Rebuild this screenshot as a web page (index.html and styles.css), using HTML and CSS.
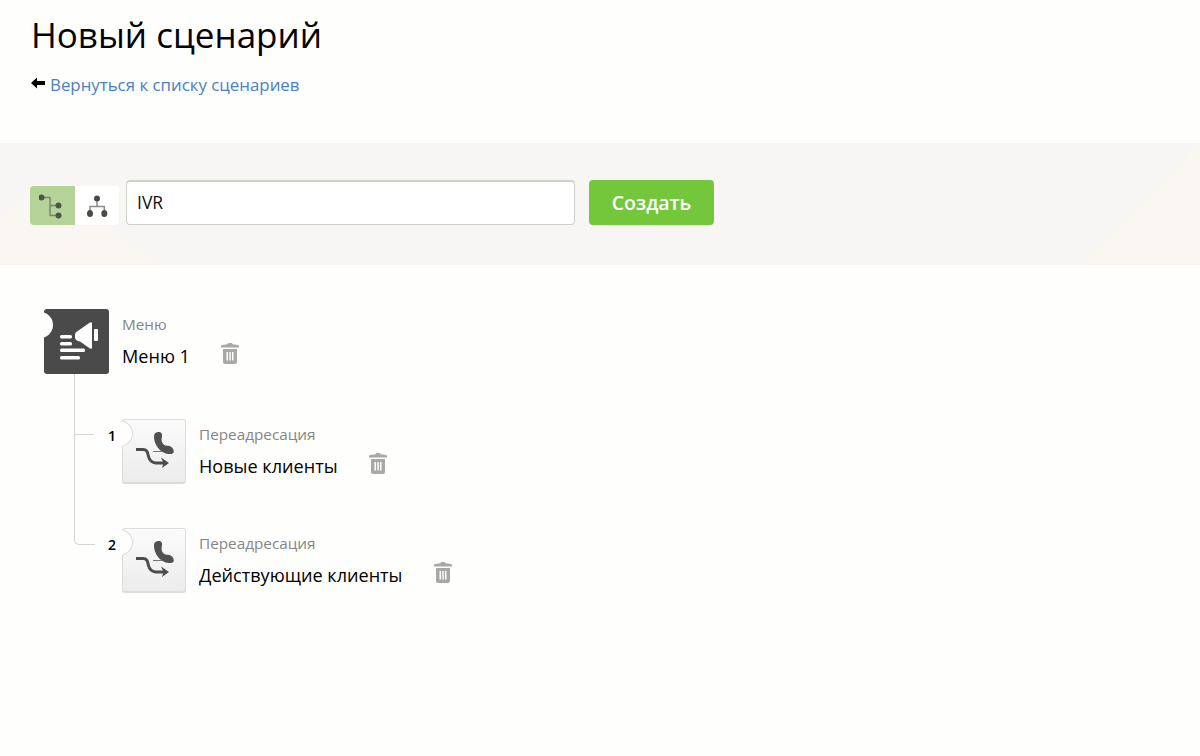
FILE: index.html
```html
<!DOCTYPE html>
<html lang="ru">
<head>
<meta charset="utf-8">
<title>Новый сценарий</title>
<link rel="stylesheet" href="styles.css">
</head>
<body>
<svg class="defs" width="0" height="0">
  <defs>
    <symbol id="trash" viewBox="0 0 18 22">
      <path d="M6.500 2.200Q6.500 1 8 1h2q1.500 0 1.500 1.200l5.500.8q1 .2 1 1.200V5.500H0V4.200q0-1 1-1.200z" fill="#a8a8a8"/>
      <path fill-rule="evenodd" d="M2 7h14v13q0 2-2 2H4q-2 0-2-2zM5.500 10v8.500h1.500V10zM8.300 10v8.500h1.500V10zM11 10v8.500h1.500V10z" fill="#a8a8a8"/>
    </symbol>
    <symbol id="forward" viewBox="0 0 64 64">
      <path d="M32 17c0-3 3-4.500 5.500-4 2.500.5 3 3 2.300 5.500-.7 3 0 5.500 2.500 7.500 1.500 1 3.500.5 5 1 2.500.8 4.500 3 4.500 5.500 0 2-2.500 2.800-5 2.500C38 34.500 31.500 25 32 17z" fill="#505050"/>
      <path d="M14 30.500h7c4.500 0 4.500 3 5.500 7 1 4 3 6 7 6.500h10" fill="none" stroke="#4c4c4c" stroke-width="3"/>
      <path d="M39 38.500l8 5.500-7 5 1.500-5z" fill="#4c4c4c"/>
      <path d="M31 32.500h9" fill="none" stroke="#777" stroke-width="1"/>
    </symbol>
  </defs>
</svg>

<header class="head">
  <h1 class="title">Новый сценарий</h1>
  <a class="back" href="#">
    <svg class="back-arrow" viewBox="0 0 14 12" width="14" height="12"><path d="M0 6l6-5.500V4h8v4H6v3.500z" fill="#000"/></svg>
    <span>Вернуться к списку сценариев</span>
  </a>
</header>

<section class="band">
  <div class="switch">
    <button class="switch-btn active" type="button" aria-label="Список">
      <svg viewBox="0 0 26 30" width="26" height="30">
        <path d="M2.500 6.500H11v18h8.500M11 14.500h8.500" fill="none" stroke="#7c8276" stroke-width="1.500"/>
        <circle cx="2.500" cy="6.500" r="3" fill="#50554c"/><circle cx="19.500" cy="14.500" r="3" fill="#50554c"/><circle cx="19.500" cy="24.500" r="3" fill="#50554c"/>
      </svg>
    </button>
    <button class="switch-btn" type="button" aria-label="Дерево">
      <svg viewBox="0 0 26 30" width="26" height="30">
        <path d="M13 7.500v8M6 22v-6.500h14.300V22" fill="none" stroke="#8a8a8a" stroke-width="1.500"/>
        <circle cx="13" cy="7.500" r="3" fill="#464c42"/><ellipse cx="6" cy="22.500" rx="3" ry="3.500" fill="#464c42"/><ellipse cx="20.300" cy="22.500" rx="3" ry="3.500" fill="#464c42"/>
      </svg>
    </button>
  </div>
  <input class="name" type="text" value="IVR">
  <button class="create" type="button">Создать</button>
</section>

<main class="tree">
  <div class="node root">
    <div class="tile tile-dark">
      <svg viewBox="0 0 65 65" width="65" height="65">
        <path d="M31 25.500q0-2 2-3l13-9q2-1 2 1v24q0 2-2 1l-10-7q-5-1-5-4z" fill="#fff"/>
        <rect x="50" y="20" width="4" height="12" rx="1" fill="#fff"/>
        <rect x="16" y="26" width="12" height="3.600" rx="1.500" fill="#fff"/>
        <rect x="16" y="33" width="12" height="3.600" rx="1.500" fill="#fff"/>
        <rect x="16" y="39.500" width="25" height="3.600" rx="1.500" fill="#fff"/>
        <rect x="16" y="47" width="20" height="3.600" rx="1.500" fill="#fff"/>
      </svg>
    </div>
    <div class="info">
      <div class="kind">Меню</div>
      <div class="line"><span class="label">Меню 1</span><svg class="trash"><use href="#trash"/></svg></div>
    </div>
  </div>

  <div class="branches">
    <div class="node child">
      <span class="num">1</span>
      <div class="tile tile-light"><svg viewBox="0 0 64 64" width="64" height="64"><use href="#forward"/></svg></div>
      <div class="info">
        <div class="kind">Переадресация</div>
        <div class="line"><span class="label">Новые клиенты</span><svg class="trash"><use href="#trash"/></svg></div>
      </div>
    </div>
    <div class="node child last">
      <span class="num">2</span>
      <div class="tile tile-light"><svg viewBox="0 0 64 64" width="64" height="64"><use href="#forward"/></svg></div>
      <div class="info">
        <div class="kind">Переадресация</div>
        <div class="line"><span class="label">Действующие клиенты</span><svg class="trash"><use href="#trash"/></svg></div>
      </div>
    </div>
  </div>
</main>
</body>
</html>
```
FILE: styles.css
```css
* { box-sizing: border-box; }
html, body { margin: 0; height: 756px; overflow: hidden; }
body { background: #fefefd; font-family: "Open Sans", "Noto Sans", sans-serif; color: #000; }
.defs { position: absolute; }

.head { height: 143px; padding: 13px 31px 0; }
.title { margin: 0; font-size: 35px; font-weight: 400; line-height: 44px; }
.back { display: flex; align-items: center; gap: 5px; margin-top: 17px; height: 20px; color: #4a80c4; font-size: 16.850px; text-decoration: none; }
.back-arrow { margin-top: -3px; }

.band { position: relative; height: 122px; background: #f7f6f4; display: flex; align-items: flex-start; padding: 37px 0 0 30px; overflow: hidden; }
.band::before, .band::after { content: ""; position: absolute; bottom: 0; background: #faf6f1; }
.band::before { left: 0; width: 160px; height: 85px; clip-path: polygon(0 42px, 40px 0, 160px 100%, 0 100%); }
.band::after { right: 0; width: 118px; height: 122px; clip-path: polygon(100% 0, 100% 100%, 0 100%); }

.switch { position: relative; z-index: 1; display: flex; margin-top: 6px; width: 89px; height: 39px; border-radius: 4px; overflow: hidden; background: #fff; }
.switch-btn { flex: 1 1 50%; border: 0; padding: 0; background: #fff; display: flex; align-items: center; justify-content: center; }
.switch-btn.active { background: #b4d396; }
.name { position: relative; z-index: 1; margin-left: 7px; width: 449px; height: 45px; border: 1px solid #cfcfcc; border-top-width: 2px; border-radius: 4px; padding: 0 10px 3px; background: #fff; font: 17.500px "Open Sans", sans-serif; color: #111; outline: 0; }
.create { position: relative; z-index: 1; margin-left: 14px; width: 125px; height: 45px; border: 0; border-radius: 4px; background: #74c73a; color: #fff; font: 600 19.500px "Open Sans", sans-serif; padding: 0 0 1px; }

.tree { padding: 44px 0 0 44px; }
.node { display: flex; align-items: flex-start; }
.tile { position: relative; flex: none; border-radius: 3px; }
.tile svg { display: block; }
.tile::before { content: ""; position: absolute; border-radius: 50%; background: #fefefd; }
.tile-dark { width: 65px; height: 65px; background: #4a4a4a; overflow: hidden; }
.tile-dark::before { top: 3px; left: -17px; width: 26px; height: 26px; }
.tile-light { width: 64px; height: 65px; background: linear-gradient(#fbfbfb, #ececec); border: 1px solid #dcdcdc; border-bottom-width: 2px; }
.tile-light::before { top: 0; left: -18px; width: 26px; height: 25px; border: 1px solid #dcdcdc; clip-path: inset(0 0 0 17px); }
.tile-light svg { margin: -1px 0 0 -1px; }

.info { margin-left: 13px; }
.kind { margin-top: 5px; font-size: 15.300px; line-height: 20px; color: #858585; }
.line { display: flex; align-items: center; margin-top: 11px; height: 22px; }
.label { font-size: 18.100px; line-height: 22px; }
.trash { width: 18px; height: 22px; margin: -6px 0 0 31px; }

.branches { position: relative; margin-left: 30px; padding-top: 45px; }
.branches::before { content: ""; position: absolute; left: 0; top: 0; width: 20px; height: 170px; border-left: 1px solid #d5d5d5; border-bottom: 1px solid #d5d5d5; border-bottom-left-radius: 5px; }
.child { position: relative; padding-left: 48px; height: 109px; }
.child::before { content: ""; position: absolute; left: 0; top: 15px; width: 20px; height: 1px; background: #d5d5d5; }
.last::before { display: none; }
.num { position: absolute; left: 34px; top: 7px; font-size: 14px; font-weight: 600; line-height: 20px; }
```
